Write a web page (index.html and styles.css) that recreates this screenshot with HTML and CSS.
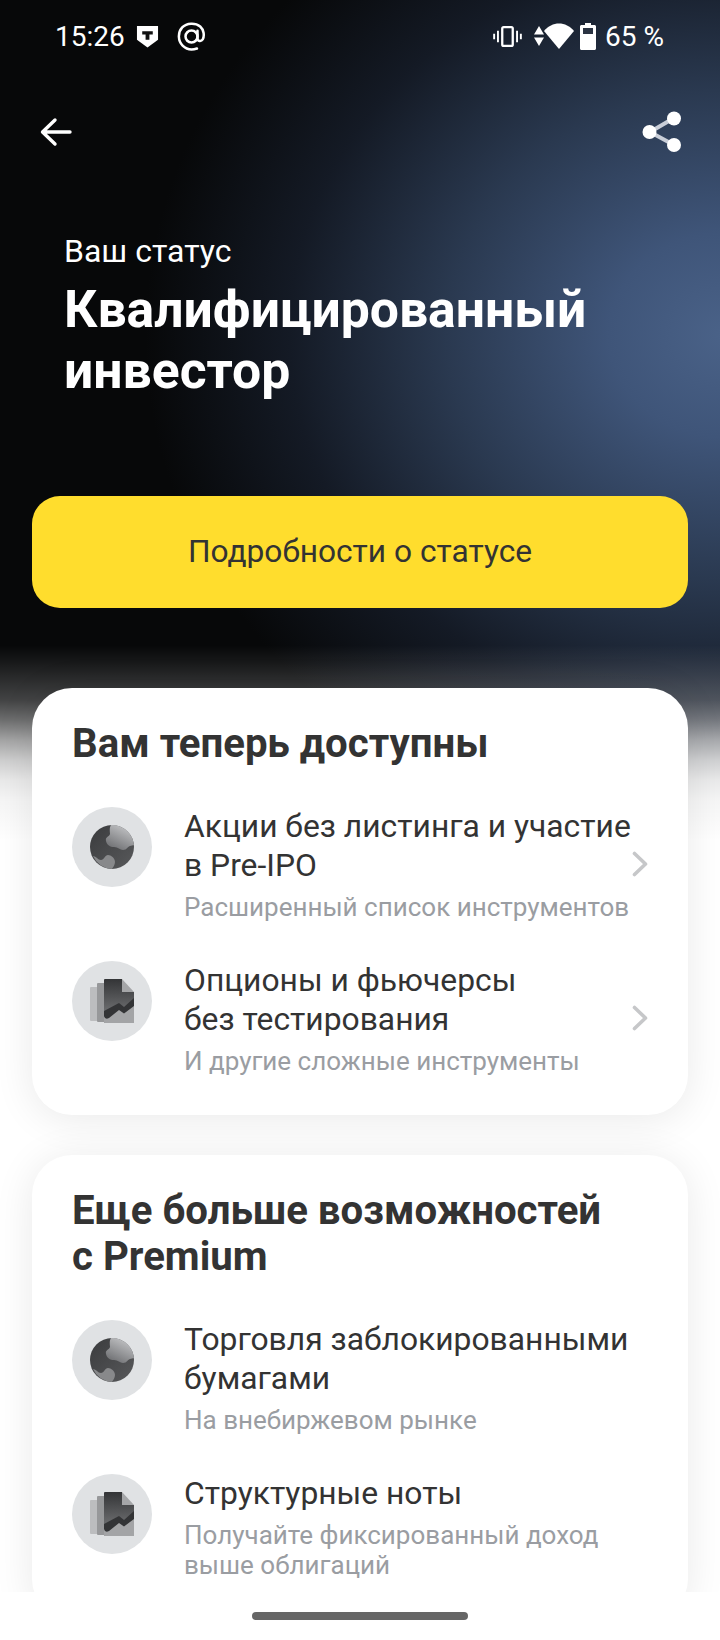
FILE: index.html
```html
<!DOCTYPE html>
<html lang="en">
<head>
    <meta charset="UTF-8">
    <meta name="viewport" content="width=device-width, initial-scale=1.0">
    <title>Квалифицированный инвестор</title>
    <link rel="stylesheet" href="styles.css">
</head>
<body>
    <svg class="defs" width="0" height="0">
        <defs>
            <linearGradient id="globeDark" x1="0" y1="0" x2="1" y2="1">
                <stop offset="0" stop-color="#3a3b3d"/>
                <stop offset="1" stop-color="#58595b"/>
            </linearGradient>
            <linearGradient id="globeLand" x1="0.2" y1="0.9" x2="0.7" y2="0">
                <stop offset="0" stop-color="#727376"/>
                <stop offset="1" stop-color="#c4c5c7"/>
            </linearGradient>
            <linearGradient id="pageDark" x1="0" y1="0" x2="0" y2="1">
                <stop offset="0" stop-color="#333436"/>
                <stop offset="1" stop-color="#808183"/>
            </linearGradient>
            <symbol id="globe" viewBox="0 0 44 44">
                <circle cx="22" cy="22" r="22" fill="url(#globeDark)"/>
                <path d="M21 0C19 3 20 7 20 9C19 12 15 12 16 16C17 20 20 22 24 22C28 22 30 25 33 25C37 25 38 21 40 21L44 20A22 22 0 0 0 21 0Z" fill="url(#globeLand)"/>
                <path d="M3 31C6 31 8 35 11 35C14 35 15 30 18 30C21 30 25 33 25 37C25 40 23 42 22 44A22 22 0 0 1 3 31Z" fill="#88898b"/>
            </symbol>
            <symbol id="docs" viewBox="0 0 44 44">
                <path d="M1 8H14V42H1Q0 42 0 41V9Q0 8 1 8Z" fill="#bcbdbf"/>
                <path d="M8 4H14V43H8Q7 43 7 42V5Q7 4 8 4Z" fill="#97989a"/>
                <path d="M15 0H32V13H44V44H15Q14 44 14 43V1Q14 0 15 0Z" fill="url(#pageDark)"/>
                <path d="M32 0L44 13H32Z" fill="#a5a6a8"/>
                <path d="M14 36L29 27L34 31L44 23V44H15Q14 44 14 43Z" fill="#a3a4a6"/>
                <path d="M14 32L29 24L34 28L44 19V27L34 34.500L29 31L19 39Q15 41 14 37Z" fill="#333436"/>
            </symbol>
        </defs>
    </svg>

    <div class="screen">
        <div class="hero-bg"></div>

        <header class="status-bar">
            <div class="status-left">
                <span class="time">15:26</span>
                <svg class="ic-shield" viewBox="0 0 24 24">
                    <path d="M1 1H23V15.500L12 23.500L1 15.500Z" fill="#fff"/>
                    <path d="M6.500 6.500H17.500V10H14V15.500H10V10H6.500Z" fill="#111"/>
                </svg>
                <svg class="ic-at" viewBox="0 0 30 30" fill="none" stroke="#fff" stroke-width="2.600" stroke-linecap="round">
                    <circle cx="15" cy="15" r="6.200"/>
                    <path d="M21.200 9V17C21.200 20 25 20.500 26.600 18C28.600 14 27.800 8 24 4.600C19 0.500 10 0.800 5.400 5.600C0.500 11 1 19.500 5.800 24.400C10 28.600 16 29 20.600 27.400"/>
                </svg>
            </div>
            <div class="status-right">
                <svg class="ic-vibrate" viewBox="0 0 30 22" fill="none" stroke="#fff">
                    <rect x="9.500" y="1.200" width="11" height="19.600" rx="1.500" stroke-width="2.400"/>
                    <path d="M5 5V17M1 8V14M25 5V17M29 8V14" stroke-width="2"/>
                </svg>
                <svg class="ic-updown" viewBox="0 0 10 20">
                    <path d="M5 0L10 8.600H0ZM5 20L0 11.400H10Z" fill="#fff"/>
                </svg>
                <svg class="ic-wifi" viewBox="0 0 30 26">
                    <path d="M0 8C8 -2 22 -2 30 8L15 26Z" fill="#fff"/>
                </svg>
                <svg class="ic-battery" viewBox="0 0 16 27">
                    <path d="M5 0H11V2H14.500C15.300 2 16 2.700 16 3.500V25.500C16 26.300 15.300 27 14.500 27H1.500C0.700 27 0 26.300 0 25.500V3.500C0 2.700 0.700 2 1.500 2H5Z" fill="#fff"/>
                    <rect x="3" y="5" width="10" height="6" fill="#2a3342"/>
                </svg>
                <span class="battery">65 %</span>
            </div>
        </header>

        <nav class="toolbar">
            <svg class="ic-back" viewBox="0 0 32 30" fill="none" stroke="#fff" stroke-width="3.400" stroke-linecap="round" stroke-linejoin="round">
                <path d="M30 15H3M15 3L2.500 15L15 27"/>
            </svg>
            <svg class="ic-share" viewBox="0 0 40 42">
                <path d="M8 21L32 7M8 21L32 34" stroke="#c9ced8" stroke-width="4"/>
                <circle cx="7.500" cy="21" r="7" fill="#fff"/>
                <circle cx="32" cy="7.500" r="7" fill="#fff"/>
                <circle cx="32" cy="34" r="7" fill="#fff"/>
            </svg>
        </nav>

        <section class="hero">
            <p class="hero-label">Ваш статус</p>
            <h1 class="hero-title">Квалифицированный инвестор</h1>
        </section>

        <a class="btn-yellow" href="#">Подробности о статусе</a>

        <section class="card">
            <h2 class="card-title">Вам теперь доступны</h2>
            <div class="item">
                <div class="item-icon"><svg><use href="#globe"/></svg></div>
                <div class="item-text">
                    <div class="item-name">Акции без листинга и участие<br>в Pre-IPO</div>
                    <div class="item-sub">Расширенный список инструментов</div>
                </div>
                <svg class="chevron" viewBox="0 0 16 26" fill="none" stroke="#c6c7c9" stroke-width="3.600" stroke-linecap="round" stroke-linejoin="round">
                    <path d="M2.500 2.500L13.500 13L2.500 23.500"/>
                </svg>
            </div>
            <div class="item">
                <div class="item-icon"><svg><use href="#docs"/></svg></div>
                <div class="item-text">
                    <div class="item-name">Опционы и фьючерсы<br>без тестирования</div>
                    <div class="item-sub">И другие сложные инструменты</div>
                </div>
                <svg class="chevron" viewBox="0 0 16 26" fill="none" stroke="#c6c7c9" stroke-width="3.600" stroke-linecap="round" stroke-linejoin="round">
                    <path d="M2.500 2.500L13.500 13L2.500 23.500"/>
                </svg>
            </div>
        </section>

        <section class="card">
            <h2 class="card-title">Еще больше возможностей<br>с Premium</h2>
            <div class="item">
                <div class="item-icon"><svg><use href="#globe"/></svg></div>
                <div class="item-text">
                    <div class="item-name">Торговля заблокированными<br>бумагами</div>
                    <div class="item-sub">На внебиржевом рынке</div>
                </div>
            </div>
            <div class="item">
                <div class="item-icon"><svg><use href="#docs"/></svg></div>
                <div class="item-text">
                    <div class="item-name">Структурные ноты</div>
                    <div class="item-sub">Получайте фиксированный доход<br>выше облигаций</div>
                </div>
            </div>
        </section>

        <div class="nav-bar"><span class="nav-handle"></span></div>
    </div>
</body>
</html>
```

FILE: styles.css
```css
html, body {
    margin: 0;
    padding: 0;
    background: #fff;
}

body {
    font-family: Roboto, "Noto Sans", sans-serif;
}

.defs {
    position: absolute;
}

.screen {
    position: relative;
    width: 720px;
    height: 1640px;
    overflow: hidden;
    background: #fff;
}

/* dark backdrop behind the top part, fades to white under the first card */
.hero-bg {
    position: absolute;
    left: 0;
    top: 0;
    width: 720px;
    height: 850px;
    background:
        linear-gradient(to bottom, rgba(255,255,255,0) 645px, rgba(255,255,255,0.06) 660px, rgba(255,255,255,0.24) 700px, rgba(255,255,255,0.41) 720px, rgba(255,255,255,0.63) 740px, rgba(255,255,255,0.8) 760px, rgba(255,255,255,0.91) 780px, rgba(255,255,255,0.96) 800px, #fff 840px),
        radial-gradient(ellipse 580px 510px at 725px 335px, #4a6288 0%, #3f5579 20%, #2a3950 48%, #141a25 75%, #070809 100%),
        #060606;
}

.status-bar {
    position: relative;
    height: 72px;
    padding: 0 56px 0 55px;
    display: flex;
    align-items: center;
    justify-content: space-between;
    color: #fff;
    font-size: 28px;
}

.status-left, .status-right {
    display: flex;
    align-items: center;
}

.ic-shield {
    width: 23px;
    height: 23px;
    margin-left: 11px;
}

.ic-at {
    width: 29px;
    height: 29px;
    margin-left: 18px;
}

.ic-vibrate {
    width: 29px;
    height: 21px;
}

.ic-updown {
    width: 10px;
    height: 20px;
    margin-left: 12px;
}

.ic-wifi {
    width: 30px;
    height: 26px;
}

.ic-battery {
    width: 16px;
    height: 27px;
    margin-left: 6px;
}

.battery {
    margin-left: 9px;
}

.toolbar {
    position: relative;
    height: 116px;
    padding: 2px 38px 0 40px;
    display: flex;
    align-items: center;
    justify-content: space-between;
}

.ic-back {
    width: 32px;
    height: 30px;
}

.ic-share {
    width: 40px;
    height: 42px;
}

.hero {
    position: relative;
    padding: 42px 32px 0 64px;
    color: #fff;
}

.hero-label {
    margin: 0;
    font-size: 32px;
    line-height: 38px;
}

.hero-title {
    margin: 9px 0 0;
    font-size: 51.7px;
    line-height: 61px;
    font-weight: 700;
}

.btn-yellow {
    position: relative;
    display: block;
    margin: 95px 32px 0;
    height: 112px;
    line-height: 112px;
    border-radius: 28px;
    background: #ffdd2d;
    color: #333;
    font-size: 31.7px;
    text-align: center;
    text-decoration: none;
}

.card {
    position: relative;
    margin: 80px 32px 0;
    padding: 33px 40px 0;
    background: #fff;
    border-radius: 40px;
    box-shadow: 0 4px 40px rgba(0,0,0,0.09);
}

.card + .card {
    margin-top: 40px;
}

.card-title {
    margin: 0 0 40px;
    font-size: 40.2px;
    line-height: 46px;
    font-weight: 700;
    color: #333;
}

.item {
    display: flex;
    align-items: flex-start;
    padding-bottom: 39px;
}

.item-icon {
    flex: none;
    width: 80px;
    height: 80px;
    border-radius: 50%;
    background: #e0e2e4;
    display: flex;
    align-items: center;
    justify-content: center;
}

.item-icon svg {
    width: 44px;
    height: 44px;
}

.item-text {
    flex: 1;
    min-width: 0;
    margin-left: 32px;
    white-space: nowrap;
}

.item-name {
    font-size: 31.8px;
    line-height: 39px;
    color: #333;
}

.item-sub {
    margin-top: 7px;
    font-size: 26px;
    line-height: 30px;
    color: #9a9da2;
}

.chevron {
    flex: none;
    width: 16px;
    height: 26px;
    margin-top: 44px;
}

.nav-bar {
    position: absolute;
    left: 0;
    bottom: 0;
    width: 720px;
    height: 48px;
    background: #fff;
    display: flex;
    justify-content: center;
    padding-top: 20px;
    box-sizing: border-box;
}

.nav-handle {
    width: 216px;
    height: 8px;
    border-radius: 4px;
    background: #666;
}
```
